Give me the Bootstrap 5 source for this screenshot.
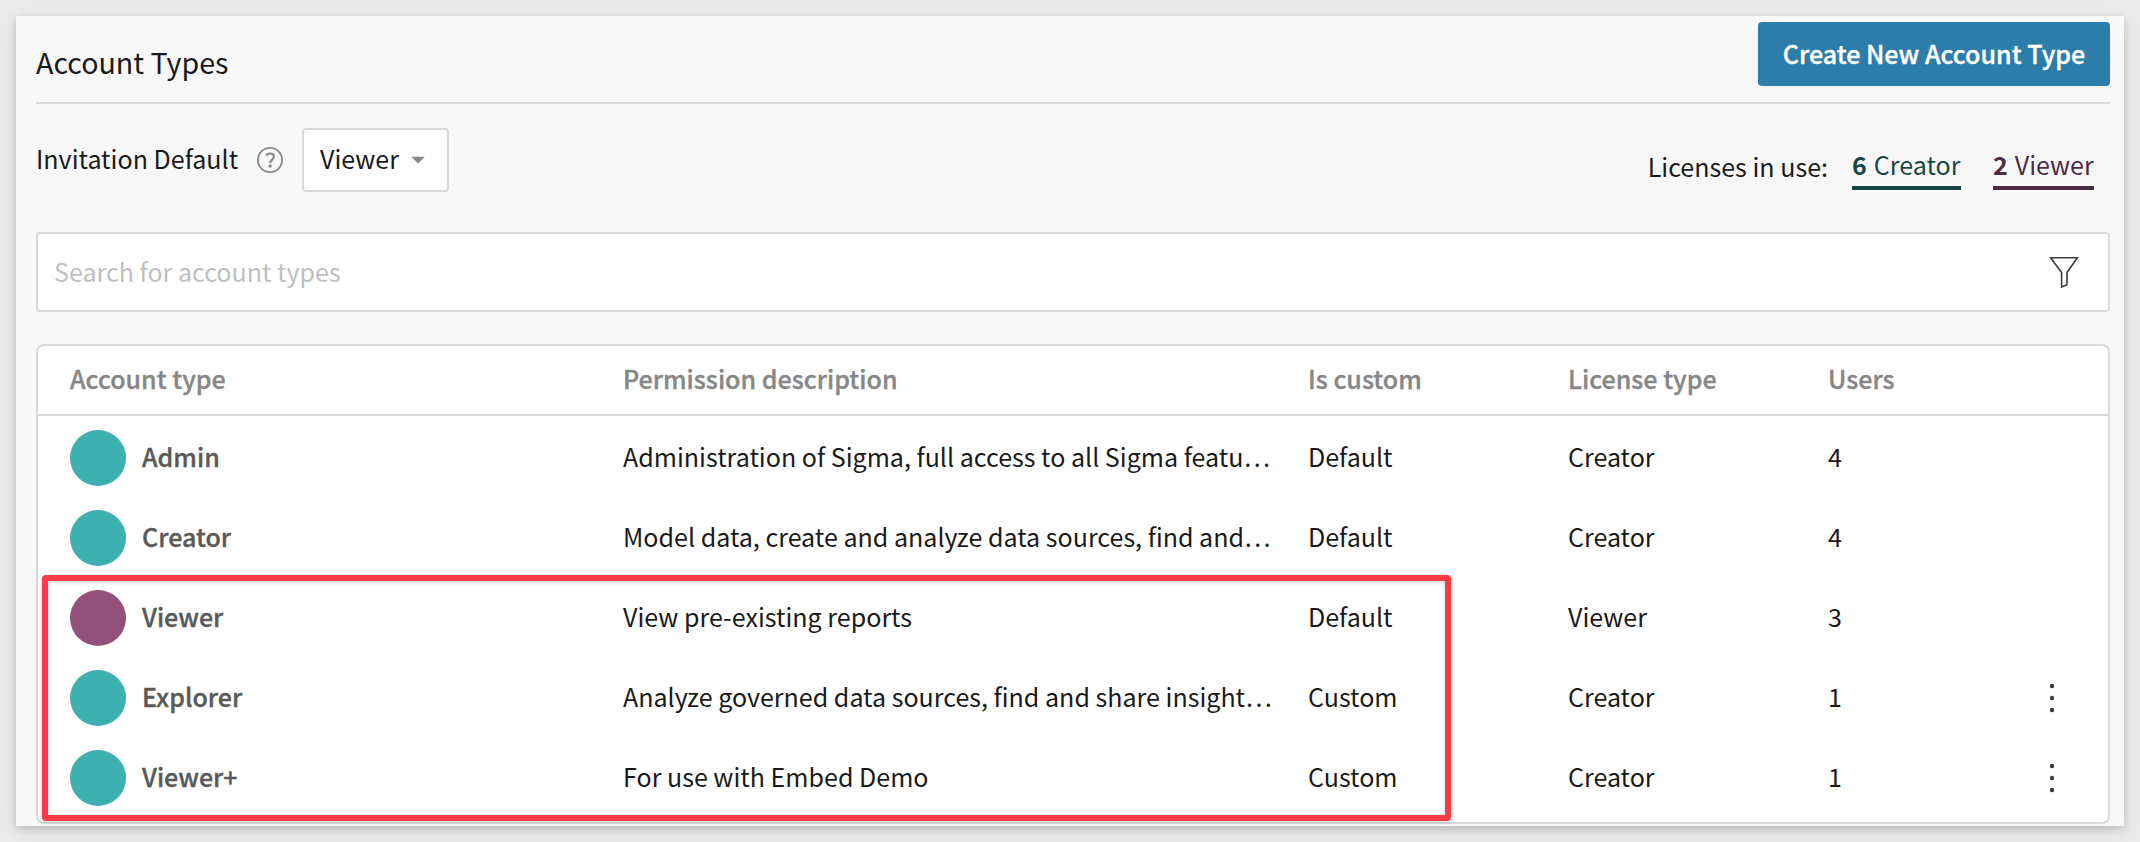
<!DOCTYPE html>
<html lang="en">
<head>
<meta charset="utf-8">
<meta name="viewport" content="width=device-width, initial-scale=1">
<title>Account Types</title>
<link href="https://cdn.jsdelivr.net/npm/bootstrap@5.3.0/dist/css/bootstrap.min.css" rel="stylesheet">
<style>
  body { background: #ebebeb; color: #1a1a1a; font-family: "Noto Sans CJK SC", "Noto Sans", sans-serif; font-size: 25.06px; line-height: 36px; min-height: 842px; overflow: hidden; }
  .panel { margin: 0 16px; height: 810px; padding: 0 14px 0 20px; background: #f8f8f8; box-shadow: 0 3px 8px rgba(0,0,0,.18), 0 6px 28px rgba(0,0,0,.06); }
  .lift { padding-bottom: 4px; }
  .semi { font-weight: 500; -webkit-text-stroke: .35px currentColor; }
  .topbar { height: 88px; border-bottom: 2px solid #d9d9d9; }
  .topbar h1 { font-size: 28.6px; font-weight: 400; line-height: 40px; margin: 26px 0 0; }
  .btn-create { margin-top: 6px; width: 352px; height: 64px; background: #2d7daa; color: #fff; border: 0; border-radius: 4px; font-size: inherit; line-height: 36px; padding: 0 0 2px; white-space: nowrap; }
  .btn-create:hover { background: #256b93; color: #fff; }
  .toolbar { height: 128px; padding-top: 24px; }
  .role-select { width: 147px; height: 64px; margin-left: 18px; padding: 0 22px 0 16px; background: #fff; border: 2px solid #d9d9d9; border-radius: 4px; }
  .help { margin-left: 18px; }
  .licenses { margin: 14px 16px 0 0; }
  .licenses-label { margin: 6px 24px 0 0; }
  .license { line-height: 36px; height: 48px; border-bottom: 4px solid; }
  .license b { font-weight: 700; margin-right: 7px; }
  .lic-creator { color: #194645; width: 109px; }
  .lic-viewer { color: #4d2b43; width: 101px; margin-left: 32px; }
  .search-box { height: 80px; background: #fff; border: 2px solid #d9d9d9; border-radius: 4px; padding: 0 29px 0 16px; }
  .search-box input { border: 0; outline: 0; padding: 0 0 2px; height: 40px; background: transparent; }
  .search-box input::placeholder { color: #bfbfbf; opacity: 1; }
  .types { margin-top: 32px; height: 480px; background: #fff; border: 2px solid #d9d9d9; border-radius: 8px; }
  .grid-row { display: grid; grid-template-columns: 553px 685px 260px 260px 200px 48px; align-items: center; height: 80px; padding-left: 32px; }
  .grid-head { height: 70px; color: #878787; border-bottom: 2px solid #d9d9d9; margin-bottom: 2px; }
  .dot { width: 56px; height: 56px; border-radius: 50%; background: #3db0b0; margin-right: 16px; }
  .dot-viewer { background: #92507a; }
  .type-name { color: #595959; }
  /* red callout drawn over the last three rows */
  .callout { position: absolute; left: 4px; top: 229px; width: 1409px; height: 246px; border: 6px solid #f93b47; border-radius: 4px; filter: drop-shadow(0 1px 2px rgba(0,0,0,.2)); pointer-events: none; }
</style>
<script src="https://cdn.jsdelivr.net/npm/bootstrap@5.3.0/dist/js/bootstrap.bundle.min.js"></script>
</head>
<body class="pt-3">
<main class="panel">
  <header class="topbar d-flex justify-content-between align-items-start">
    <h1>Account Types</h1>
    <button class="btn btn-create semi" type="button">Create New Account Type</button>
  </header>

  <section class="toolbar d-flex justify-content-between align-items-start">
    <div class="d-flex align-items-center">
      <span class="lift">Invitation Default</span>
      <svg class="help" width="28" height="28" viewBox="0 0 28 28" fill="none" stroke="#878787"><circle cx="14" cy="14" r="12.1" stroke-width="1.8"/><path d="M10.1 9.5C11.2 8 12.5 7.5 14 7.5c2.3 0 3.9 1.2 3.9 3.2 0 2.7-3.7 3.2-3.7 6.4" stroke-width="2.2"/><circle cx="14.1" cy="20" r="1.7" fill="#878787" stroke="none"/></svg>
      <div class="role-select d-flex align-items-center">
        <span class="lift">Viewer</span>
        <svg class="ms-auto" width="14" height="8" viewBox="0 0 14 8"><path d="M.3.8h13.4L7 7.6z" fill="#878787"/></svg>
      </div>
    </div>
    <div class="licenses d-flex">
      <span class="licenses-label">Licenses in use:</span>
      <div class="license lic-creator text-nowrap"><div class="pt-1"><b>6</b>Creator</div></div>
      <div class="license lic-viewer text-nowrap"><div class="pt-1"><b>2</b>Viewer</div></div>
    </div>
  </section>

  <div class="search-box d-flex align-items-center">
    <input class="flex-grow-1" type="text" placeholder="Search for account types" aria-label="Search for account types">
    <svg width="30" height="34" viewBox="0 0 30 34" fill="none" stroke="#3c3c3c" stroke-width="1.6"><path d="M1.6 2.8h26.8L18 17.6v12.2L12.6 32V17.6z"/></svg>
  </div>

  <section class="types position-relative">
    <div class="grid-row grid-head semi">
      <span class="lift">Account type</span><span class="lift">Permission description</span><span class="lift">Is custom</span><span class="lift">License type</span><span class="lift">Users</span>
    </div>
    <div class="grid-row">
      <div class="d-flex align-items-center"><span class="dot"></span><span class="type-name semi lift">Admin</span></div>
      <div class="text-nowrap lift">Administration of Sigma, full access to all Sigma featu…</div><span class="lift">Default</span><span class="lift">Creator</span><span class="lift">4</span>
    </div>
    <div class="grid-row">
      <div class="d-flex align-items-center"><span class="dot"></span><span class="type-name semi lift">Creator</span></div>
      <div class="text-nowrap lift">Model data, create and analyze data sources, find and…</div><span class="lift">Default</span><span class="lift">Creator</span><span class="lift">4</span>
    </div>
    <div class="grid-row">
      <div class="d-flex align-items-center"><span class="dot dot-viewer"></span><span class="type-name semi lift">Viewer</span></div>
      <div class="text-nowrap lift">View pre-existing reports</div><span class="lift">Default</span><span class="lift">Viewer</span><span class="lift">3</span>
    </div>
    <div class="grid-row">
      <div class="d-flex align-items-center"><span class="dot"></span><span class="type-name semi lift">Explorer</span></div>
      <div class="text-nowrap lift">Analyze governed data sources, find and share insight…</div><span class="lift">Custom</span><span class="lift">Creator</span><span class="lift">1</span>
      <svg class="mx-auto" width="8" height="32" viewBox="0 0 8 32" fill="#3c3c3c"><circle cx="4" cy="4" r="2.2"/><circle cx="4" cy="16" r="2.2"/><circle cx="4" cy="28" r="2.2"/></svg>
    </div>
    <div class="grid-row">
      <div class="d-flex align-items-center"><span class="dot"></span><span class="type-name semi lift">Viewer+</span></div>
      <div class="text-nowrap lift">For use with Embed Demo</div><span class="lift">Custom</span><span class="lift">Creator</span><span class="lift">1</span>
      <svg class="mx-auto" width="8" height="32" viewBox="0 0 8 32" fill="#3c3c3c"><circle cx="4" cy="4" r="2.2"/><circle cx="4" cy="16" r="2.2"/><circle cx="4" cy="28" r="2.2"/></svg>
    </div>
    <div class="callout"></div>
  </section>
</main>
</body>
</html>
